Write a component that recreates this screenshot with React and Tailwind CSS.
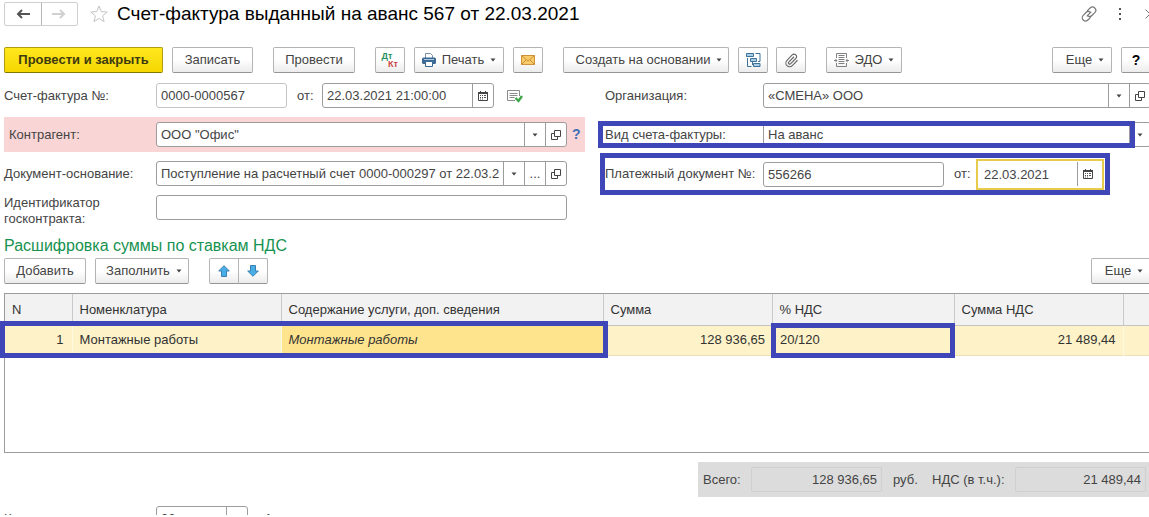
import React from "react";
import clsx from "clsx";

const INPUT = "h-full min-w-0 flex-1 bg-transparent px-1 outline-none";

function Caret() {
  return (
    <svg viewBox="0 0 6 4" className="h-1 w-1.5 shrink-0" fill="#444">
      <path d="M.5.5h5L3 3.500z" />
    </svg>
  );
}

function OpenIcon() {
  return (
    <svg viewBox="0 0 10 10" className="h-2.5 w-2.5" fill="none" stroke="#444">
      <path d="M3.5.5h6v6h-6zM3 3.5H.5v6h6V7" />
    </svg>
  );
}

function CalendarIcon() {
  return (
    <svg viewBox="0 0 10 10" className="h-2.5 w-2.5" fill="none" stroke="#444">
      <path d="M.5 1.500h9v8h-9z" />
      <path d="M0 2h10" strokeWidth="2" />
      <path d="M2.500 0v2M7.500 0v2" />
      <path d="M2 4.500h1M4 4.500h1M6 4.500h2M2 6.500h1M4 6.500h1M6 6.500h2M2 8h1M4 8h1" stroke="#555" />
    </svg>
  );
}

function Button({ className, primary, children, ...rest }) {
  return (
    <button
      type="button"
      className={clsx(
        "flex h-[26px] shrink-0 items-center justify-center rounded-[2px] border bg-linear-to-b",
        primary
          ? "border-[#b09c10] border-b-[#857600] from-[#ffe81c] to-[#f5d600] font-bold text-[#403a10]"
          : "border-[#b4b4b4] border-b-[#959595] from-white from-50% to-[#ececec]",
        className
      )}
      {...rest}
    >
      {children}
    </button>
  );
}

function Field({ className, children }) {
  return (
    <div className={clsx("flex h-[25px] items-center rounded-[3px] border border-[#9c9c9c] bg-white", className)}>
      {children}
    </div>
  );
}

function FieldButton({ label, children }) {
  return (
    <button
      type="button"
      aria-label={label}
      className="flex h-full w-[21px] shrink-0 items-center justify-center border-l border-[#9c9c9c]"
    >
      {children}
    </button>
  );
}

function Choice({ id, value }) {
  return (
    <div className="relative h-full min-w-0 flex-1">
      <select id={id} className="h-full w-full appearance-none bg-transparent pr-6 pl-1 outline-none">
        <option>{value}</option>
      </select>
      <span className="pointer-events-none absolute inset-y-0 right-0 flex w-[21px] items-center justify-center border-l border-[#9c9c9c]">
        <Caret />
      </span>
    </div>
  );
}

function Mark({ className }) {
  return <span className={clsx("pointer-events-none absolute border-5 border-[#3f46b8]", className)} />;
}

function TitleBar() {
  return (
    <header className="flex h-[25px] items-center">
      <div className="flex h-6 w-[74px] rounded-[2px] border border-[#cfcfcf]">
        <button type="button" aria-label="Назад" className="flex flex-1 items-center justify-center border-r border-[#b4b4b4]">
          <svg viewBox="0 0 14 10" className="h-2.5 w-3.5" fill="none" stroke="#555" strokeWidth="2">
            <path d="M14 5H2M6 1L2 5l4 4" />
          </svg>
        </button>
        <button type="button" aria-label="Вперед" className="flex flex-1 items-center justify-center">
          <svg viewBox="0 0 14 10" className="h-2.5 w-3.5" fill="none" stroke="#d0d0d0" strokeWidth="2">
            <path d="M0 5h12M8 1l4 4-4 4" />
          </svg>
        </button>
      </div>
      <button type="button" aria-label="В избранное" className="ml-3">
        <svg viewBox="0 0 18 18" className="h-[18px] w-[18px]" fill="none" stroke="#c4c4c4">
          <path d="M9 1l2.2 5.6 6 .4-4.6 3.8 1.5 5.9L9 13.4l-5.1 3.3 1.5-5.9L.8 7l6-.4z" />
        </svg>
      </button>
      <h1 className="ml-[9px] flex-1 text-[19px] leading-6 whitespace-nowrap text-black">
        Счет-фактура выданный на аванс 567 от 22.03.2021
      </h1>
      <div className="-mr-1 flex shrink-0 items-center">
        <button type="button" aria-label="Получить ссылку">
          <svg viewBox="0 0 24 24" className="h-[18px] w-[18px]" fill="none" stroke="#777" strokeWidth="1.6" strokeLinecap="round">
            <path d="M10 7.500l3.500-3.500a4.300 4.300 0 0 1 6.200 6.200l-3.800 3.800a4.300 4.300 0 0 1-5 .8M14 16.500l-3.500 3.500a4.300 4.300 0 0 1-6.200-6.200l3.800-3.800a4.300 4.300 0 0 1 5-.8M9.500 14.500l5-5" />
          </svg>
        </button>
        <button type="button" aria-label="Действия" className="ml-5">
          <svg viewBox="0 0 4 12" className="h-3 w-1" fill="#555">
            <path d="M1 0h2v2H1zM1 5h2v2H1zM1 10h2v2H1z" />
          </svg>
        </button>
        <button type="button" aria-label="Закрыть" className="ml-[23px]">
          <svg viewBox="0 0 10 10" className="h-2.5 w-2.5" fill="none" stroke="#777">
            <path d="M.5.5l9 9M9.500.5l-9 9" />
          </svg>
        </button>
      </div>
    </header>
  );
}

function Toolbar() {
  return (
    <div className="mt-[21px] flex">
      <Button primary className="w-[159px]">Провести и закрыть</Button>
      <Button className="ml-[9px] w-[81px]">Записать</Button>
      <Button className="ml-5 w-[82px]">Провести</Button>
      <Button className="ml-5 w-[30px]" aria-label="Дебет и кредит">
        <span className="flex flex-col text-[9px] leading-[8px] font-bold">
          <span className="pr-1.5 text-[#2a9060]">Дт</span>
          <span className="pl-1.5 text-[#c84848]">Кт</span>
        </span>
      </Button>
      <Button className="ml-[9px] w-[90px] gap-1.5">
        <svg viewBox="0 0 14 14" className="h-3.5 w-3.5">
          <path d="M3.500 5V.5h5l2 2V5" fill="#fff" stroke="#7a8fa5" />
          <rect y="4.500" width="14" height="6.500" rx="1.500" fill="#3d6a94" />
          <path d="M2 6.500h10" stroke="#a7c7e3" />
          <path d="M3.500 8.500h7v5h-7z" fill="#fff" stroke="#3d6a94" />
        </svg>
        Печать
        <Caret />
      </Button>
      <Button className="ml-[9px] w-[30px]" aria-label="Отправить по почте">
        <svg viewBox="0 0 14 10" className="h-2.5 w-3.5" fill="#f7ca6a" stroke="#cf9238">
          <path d="M.5.5h13v9H.5z" />
          <path d="M.5.500L7 6l6.500-5.500M.5 9.500L5 5M13.500 9.500L9 5" fill="none" />
        </svg>
      </Button>
      <Button className="ml-5 w-[166px] gap-1.5 pl-1.5">
        Создать на основании
        <Caret />
      </Button>
      <Button className="ml-[9px] w-[30px]" aria-label="Структура подчиненности">
        <svg viewBox="0 0 15 15" className="h-[15px] w-[15px]" fill="#a9cde6" stroke="#3f7299">
          <path d="M.5.5h7v3h-7zM4.500 5.500h6v3h-6zM7.500 10.500h6.500v3H7.500z" />
          <path d="M9.500.5h4.500v8h-2M1.500 5v8.500h4M6.500 8.500v3.500" fill="none" />
        </svg>
      </Button>
      <Button className="ml-2 w-[30px]" aria-label="Присоединенные файлы">
        <svg viewBox="0 0 24 24" className="h-[15px] w-[15px]" fill="none" stroke="#666" strokeWidth="1.800">
          <path d="M16 6l-8.400 8.600a2 2 0 0 0 2.800 2.800l8.400-8.600a4 4 0 1 0-5.700-5.700l-8.300 8.600a6 6 0 1 0 8.500 8.500l8.300-8.600" />
        </svg>
      </Button>
      <Button className="ml-5 w-[76px] gap-1.5">
        <svg viewBox="0 0 15 14" className="h-3.5 w-[15px]" fill="none" stroke="#808080">
          <path d="M2.500 5V.5h10V5M2.500 10v3.500h10V10M4.500 2.500h6M4.500 4.500h6M4.500 6.500h6M4.500 8.500h6M4.500 10.500h6M0 7.500h3M12 7.500h3" />
          <path d="M1.500 5.500v4l2-2zM13.500 5.500v4l-2-2z" fill="#808080" stroke="none" />
        </svg>
        ЭДО
        <Caret />
      </Button>
      <Button className="ml-auto w-[60px] gap-1.5 pl-1.5">
        Еще
        <Caret />
      </Button>
      <Button className="ml-[9px] w-[30px] text-[14px] font-bold text-black" aria-label="Справка">
        ?
      </Button>
    </div>
  );
}

function LeftForm() {
  return (
    <div className="flex flex-col">
      <div className="flex items-center">
        <label htmlFor="number" className="w-[152px]">Счет-фактура №:</label>
        <Field className="w-[131px] border-[#c4c4c4]">
          <input id="number" className={INPUT} defaultValue="0000-0000567" />
        </Field>
        <label htmlFor="date" className="w-[35px] pl-2.5">от:</label>
        <Field className="w-[172px]">
          <input id="date" className={INPUT} defaultValue="22.03.2021 21:00:00" />
          <FieldButton label="Выбрать дату"><CalendarIcon /></FieldButton>
        </Field>
        <svg viewBox="0 0 16 14" className="ml-[13px] h-3.5 w-4" fill="none" stroke="#8a8a8a">
          <path d="M8 11.500H.5V1.500h12V7M2.500 4.500h8M2.500 6.500h8M2.500 8.500h5" />
          <path d="M8.500 9l3 3 3.500-5" stroke="#3fa648" strokeWidth="2.400" />
        </svg>
      </div>
      <div className="mt-[9px] flex h-[35px] items-center bg-[#fad5d5]">
        <label htmlFor="partner" className="w-[152px] pl-[5px]">Контрагент:</label>
        <Field className="w-[411px]">
          <Choice id="partner" value={'ООО "Офис"'} />
          <FieldButton label="Открыть контрагента"><OpenIcon /></FieldButton>
        </Field>
        <button type="button" className="ml-[5px] w-2 text-[14px] font-bold text-[#3f6fb5]">?</button>
      </div>
      <div className="mt-[9px] flex items-center">
        <label htmlFor="basis" className="w-[152px]">Документ-основание:</label>
        <Field className="w-[411px]">
          <input
            id="basis"
            className="h-full min-w-0 flex-1 bg-transparent pl-1 outline-none"
            defaultValue="Поступление на расчетный счет 0000-000297 от 22.03.2021"
          />
          <span className="w-1" />
          <FieldButton label="Список документов"><Caret /></FieldButton>
          <FieldButton label="Подобрать документ">...</FieldButton>
          <FieldButton label="Открыть документ"><OpenIcon /></FieldButton>
        </Field>
      </div>
      <div className="mt-[9px] flex items-start">
        <label htmlFor="contract" className="w-[152px] leading-4">
          Идентификатор
          <br />
          госконтракта:
        </label>
        <Field className="w-[411px]">
          <input id="contract" className={INPUT} />
        </Field>
      </div>
    </div>
  );
}

function RightForm() {
  return (
    <div className="flex min-w-0 flex-col">
      <div className="flex items-center">
        <label htmlFor="company" className="w-[158px] shrink-0">Организация:</label>
        <Field className="flex-1">
          <Choice id="company" value="«СМЕНА» ООО" />
          <FieldButton label="Открыть организацию"><OpenIcon /></FieldButton>
        </Field>
      </div>
      <div className="relative mt-3.5 flex items-center">
        <label htmlFor="kind" className="w-[158px] shrink-0">Вид счета-фактуры:</label>
        <Field className="flex-1">
          <Choice id="kind" value="На аванс" />
        </Field>
        <Mark className="-inset-y-px right-4 -left-[7px]" />
      </div>
      <div className="relative mt-1.5 flex h-[42px] items-center self-start pr-1.5">
        <label htmlFor="payment" className="w-[158px] shrink-0 whitespace-nowrap">Платежный документ №:</label>
        <Field className="w-[181px]">
          <input id="payment" className={INPUT} defaultValue="556266" />
        </Field>
        <label htmlFor="payment-date" className="w-8 pl-2.5">от:</label>
        <Field className="h-[31px] w-32 rounded-none border-2 border-[#e8cb4c]">
          <input id="payment-date" className="h-full min-w-0 flex-1 px-1.5 outline-none" defaultValue="22.03.2021" />
          <span className="flex h-6 pr-1">
            <FieldButton label="Выбрать дату платежа"><CalendarIcon /></FieldButton>
          </span>
        </Field>
        <Mark className="inset-y-0 right-0 -left-[5px]" />
      </div>
    </div>
  );
}

function TableCommands() {
  return (
    <div className="mt-0.5 flex">
      <Button className="w-[82px]">Добавить</Button>
      <Button className="ml-[9px] w-[94px] gap-1.5 pl-1">
        Заполнить
        <Caret />
      </Button>
      <div className="ml-5 flex">
        <Button className="w-[30px] rounded-r-none" aria-label="Переместить вверх">
          <svg viewBox="0 0 12 12" className="h-3 w-3" fill="#4aaee6" stroke="#3a7fb0">
            <path d="M6 .7L11.300 6H8.500v5.500h-5V6H.7z" />
          </svg>
        </Button>
        <Button className="-ml-px w-[30px] rounded-l-none" aria-label="Переместить вниз">
          <svg viewBox="0 0 12 12" className="h-3 w-3" fill="#4aaee6" stroke="#3a7fb0">
            <path d="M6 11.300L.7 6h2.800V.5h5V6h2.800z" />
          </svg>
        </Button>
      </div>
      <Button className="ml-auto w-[60px] gap-1.5 pl-1.5">
        Еще
        <Caret />
      </Button>
    </div>
  );
}

const COLUMNS = [
  { title: "N", width: "w-[67px]" },
  { title: "Номенклатура", width: "w-[209px]" },
  { title: "Содержание услуги, доп. сведения", width: "w-[322px]" },
  { title: "Сумма", width: "w-[169px]" },
  { title: "% НДС", width: "w-[182px]" },
  { title: "Сумма НДС", width: "w-[169px]" },
  { title: "", width: "w-auto" },
];

function RatesTable() {
  return (
    <div className="mt-[9px] h-40 border border-[#9c9c9c]">
      <table className="w-full table-fixed border-collapse text-[#333]">
        <thead>
          <tr className="h-[31px] border-b border-[#c4c4c4] bg-[#f2f2f2]">
            {COLUMNS.map((col) => (
              <th
                key={col.title}
                className={clsx("border-r border-[#c9c9c9] pl-[7px] text-left font-normal whitespace-nowrap last:border-r-0", col.width)}
              >
                {col.title}
              </th>
            ))}
          </tr>
        </thead>
        <tbody>
          <tr className="relative h-[30px] border-b border-[#e9dfb8] bg-[#fdf2c8]">
            <td className="border-r border-[#fff9e0] pr-2 text-right">
              1
              <Mark className="-top-1 -left-[5px] h-[37px] w-[608px]" />
            </td>
            <td className="border-r border-[#fff9e0] pl-[7px]">Монтажные работы</td>
            <td className="bg-[#ffe48e] pl-[7px] italic">Монтажные работы</td>
            <td className="pr-[7px] text-right">128 936,65</td>
            <td className="relative pl-2">
              20/120
              <Mark className="-inset-x-px -top-[3px] h-[35px]" />
            </td>
            <td className="border-r border-[#fff9e0] pr-[7px] text-right">21 489,44</td>
            <td />
          </tr>
        </tbody>
      </table>
    </div>
  );
}

function Totals() {
  const box = "h-[25px] w-[131px] rounded-[2px] border border-[#cfcfcf] bg-transparent px-1 text-right outline-none";
  return (
    <div className="mt-[9px] flex h-[35px] items-center self-end bg-[#dcdcdc] pr-[5px] pl-[5px]">
      <label htmlFor="total" className="w-12">Всего:</label>
      <input id="total" className={box} defaultValue="128 936,65" readOnly />
      <span className="ml-[11px] w-[39px]">руб.</span>
      <label htmlFor="vat" className="w-[83px] whitespace-nowrap">НДС (в т.ч.):</label>
      <input id="vat" className={box} defaultValue="21 489,44" readOnly />
    </div>
  );
}

export default function App() {
  return (
    <div className="h-screen overflow-hidden border-b-2 border-white bg-white font-['Liberation_Sans',Arial,sans-serif] text-[13px] text-[#444]">
      <main className="-mr-[2px] flex flex-col pt-px pl-1">
        <TitleBar />
        <Toolbar />
        <div className="mt-2.5 grid grid-cols-[581px_minmax(0,1fr)] gap-5">
          <LeftForm />
          <RightForm />
        </div>
        <h2 className="mt-[9px] text-[16px] leading-5 text-[#16924f]">Расшифровка суммы по ставкам НДС</h2>
        <TableCommands />
        <RatesTable />
        <Totals />
        <div className="mt-[9px] flex items-center">
          <label htmlFor="code" className="w-[152px]">Код вида операции:</label>
          <Field className="w-[92px]">
            <Choice id="code" value="02" />
          </Field>
          <span className="pl-4">Авансы полученные</span>
        </div>
      </main>
    </div>
  );
}
